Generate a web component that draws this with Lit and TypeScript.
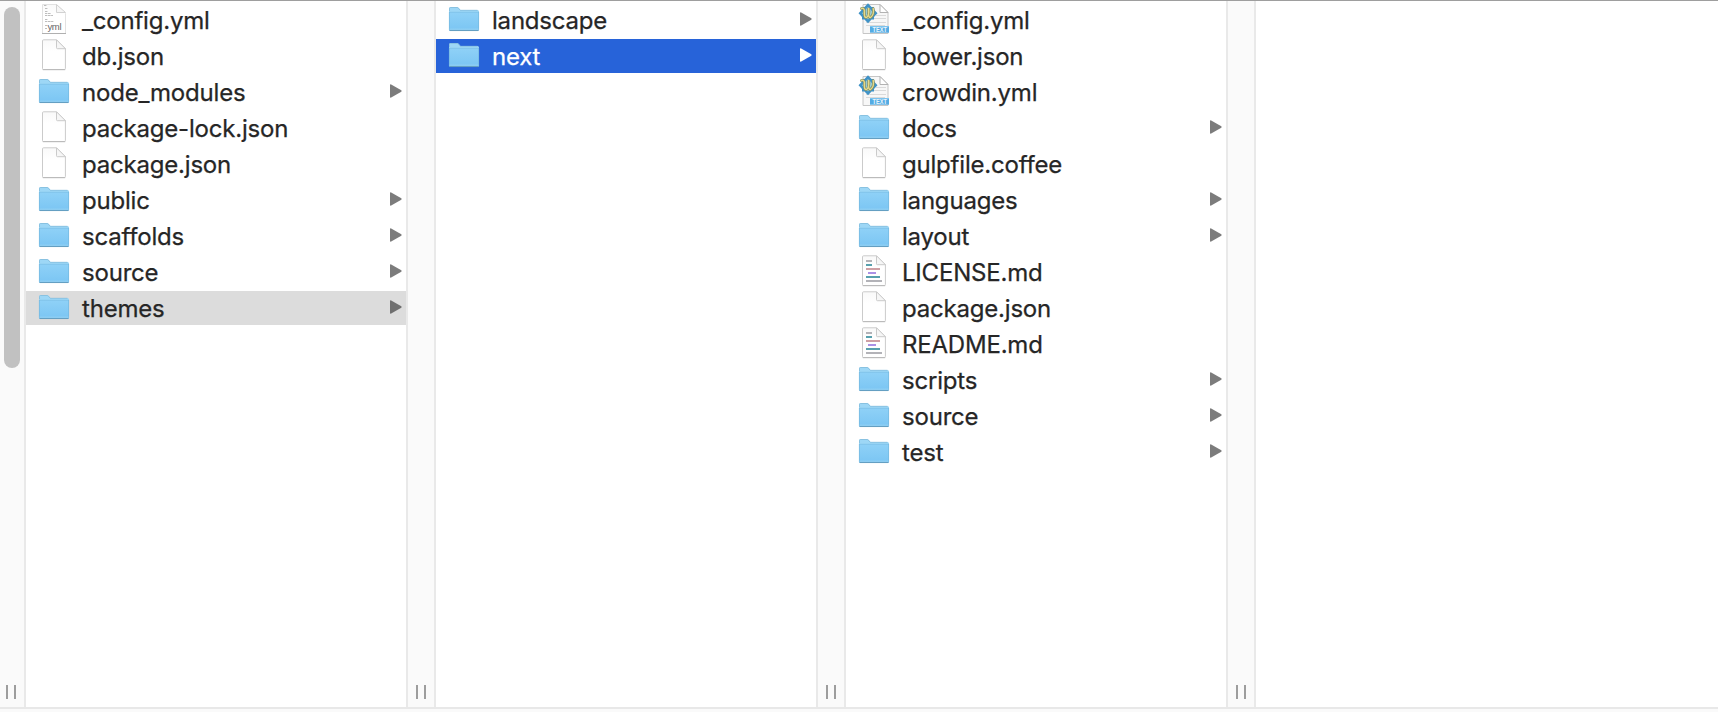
import { LitElement, html, svg, css, nothing } from "lit";
import { customElement, property } from "lit/decorators.js";
import { classMap } from "lit/directives/class-map.js";

type Kind = "folder" | "blank" | "yml" | "text" | "markdown";
interface Entry { name: string; kind: Kind; state?: "path" | "active"; }

const f = (name: string, kind: Kind = "folder", state?: "path" | "active"): Entry => ({ name, kind, state });

const COLUMNS: Entry[][] = [
  [
    f("_config.yml", "yml"), f("db.json", "blank"), f("node_modules"),
    f("package-lock.json", "blank"), f("package.json", "blank"), f("public"),
    f("scaffolds"), f("source"), f("themes", "folder", "path"),
  ],
  [f("landscape"), f("next", "folder", "active")],
  [
    f("_config.yml", "text"), f("bower.json", "blank"), f("crowdin.yml", "text"),
    f("docs"), f("gulpfile.coffee", "blank"), f("languages"), f("layout"),
    f("LICENSE.md", "markdown"), f("package.json", "blank"), f("README.md", "markdown"),
    f("scripts"), f("source"), f("test"),
  ],
];

const paperDefs = svg`<defs>
  <linearGradient id="paper" x1="0" y1="0" x2="0" y2="1">
    <stop offset="0" stop-color="#f9f9f9"/><stop offset=".4" stop-color="#fff"/>
  </linearGradient></defs>`;

const page = svg`
  <path d="M7.5 .8H20.5L29.4 9.700V29.500Q29.400 30.500 28.400 30.500H7.500Q6.500 30.500 6.500 29.500V1.800Q6.500 .8 7.500 .8Z" fill="url(#paper)" stroke="#cbcbcb"/>
  <path d="M6.800 30.700H29.200" stroke="#b8b8b8"/>
  <path d="M20.500 .8V8.700Q20.500 9.700 21.500 9.700H29.400Z" fill="#f6f6f6" stroke="#cacaca"/>`;

const glyphs: Record<Kind, unknown> = {
  folder: svg`
    <defs><linearGradient id="front" x1="0" y1="0" x2="0" y2="1">
      <stop offset="0" stop-color="#8fd1f7"/><stop offset="1" stop-color="#7ac5f3"/>
    </linearGradient></defs>
    <path d="M3 26V5.500Q3 4 4.500 4H11Q12 4 12.700 4.800L14.600 7H31.500Q33 7 33 8.500V26Z" fill="#9dd7f6"/>
    <path d="M3.500 8V5.500Q3.500 4.500 4.500 4.500H11Q12 4.500 12.500 5.300L14.300 7.300H31.500" fill="none" stroke="#84bcdc" stroke-width=".8"/>
    <path d="M3 9H33V26.500Q33 28 31.500 28H4.500Q3 28 3 26.500Z" fill="url(#front)"/>
    <path d="M3 9.300H33" stroke="#7cbfe6" stroke-width=".7"/>
    <path d="M3.400 9V27M32.600 9V27" stroke="#76b7de" stroke-width=".7"/>
    <path d="M3.500 26.200H32.500" stroke="#a4d9f6" stroke-width=".7"/>
    <path d="M3.500 27.500H32.500" stroke="#649fc2" stroke-width="1.100"/>`,
  blank: svg`${paperDefs}${page}`,
  yml: svg`${paperDefs}
    <path d="M6.500 1.500H20.500L29.500 10.500V30.500H6.500Z" fill="url(#paper)" stroke="#e2e2e2"/>
    <path d="M6 30.500H30" stroke="#b0b0b0"/>
    <path d="M20.500 1.500V9.500H29.500Z" fill="#f6f6f6" stroke="#d2d2d2"/>
    <path d="M8 2.500H11M9 5.500H12M9 8.500H12M9 10.500H15M9 12.500H17M9 16.500H12M9 18.500H18M9 22.500H11M9 25.500H11"
      stroke="#bdbdbd" stroke-dasharray="2 .6 3 .5"/>
    <text class="ext" x="11.500" y="26.800" textLength="14">yml</text>`,
  text: svg`${paperDefs}
    <path d="M7 1.500H24L32 9.500V30.500H7Z" fill="#f7f7f7" stroke="#c6c6c6"/>
    <path d="M24 1.500V9.500H32Z" fill="#fff" stroke="#b2b2b2"/>
    <path d="M20 12.500H30M17 15.500H30M10 19.500H30M10 22.500H29" stroke="#dadada"/>
    <path d="M12 .3L15.500 4L18 4V6.500L21.500 10.300L18 14V16.500H15.500L12 20.200L8.500 16.500H6V14L2.500 10.300L6 6.500V4H8.500Z" fill="#3f92c6"/>
    <path d="M12 4L18 10.300L12 16.500L6 10.300Z" fill="#9bcbd3"/>
    <g fill="none" stroke-linecap="round">
      <path d="M5.500 5.500Q8.800 4.500 8.300 9Q8 15 10.500 14.500Q13.500 12.500 12.700 5Q11.800 15 14.500 14.500Q18.500 11.500 17.200 5.500" stroke="#7e8d62" stroke-width="2.700"/>
      <path d="M5.500 5.500Q8.800 4.500 8.300 9Q8 15 10.500 14.500Q13.500 12.500 12.700 5Q11.800 15 14.500 14.500Q18.500 11.500 17.200 5.500" stroke="#e6d98a" stroke-width="1.400"/>
    </g>
    <path d="M14 23H33V29.700H14Z" fill="#53abe3"/>
    <path d="M14 23.500H33" stroke="#7cc3ee"/>
    <text class="tag" x="16.500" y="28.900" textLength="14.500" lengthAdjust="spacingAndGlyphs">TEXT</text>`,
  markdown: svg`${paperDefs}${page}
    <g stroke-width="1.800">
      <path d="M10 6H16M10 26H26" stroke="#b3b3b8"/>
      <path d="M10 10H16M10 22H24" stroke="#58a0ae"/>
      <path d="M10 14H24" stroke="#c9969b"/>
      <path d="M12 18H20" stroke="#a285e4"/>
    </g>`,
};

@customElement("file-row")
class FileRow extends LitElement {
  @property({ attribute: false }) entry!: Entry;

  static styles = css`
    :host { display: block; }
    .row {
      display: flex; align-items: center; height: 34px;
      padding: 0 4px 0 10px; box-sizing: border-box;
      color: #262626; font: 400 24px/34px Inter, "Liberation Sans", sans-serif;
    }
    .path { background: #dcdcdc; }
    .active { background: #2763d9; color: #fff; }
    .icon { flex: none; width: 36px; height: 34px; overflow: visible; }
    .name {
      flex: 1; padding: 2px 0 0 10px; white-space: nowrap;
      letter-spacing: -0.2px; -webkit-text-stroke: 0.25px currentColor;
    }
    .arrow { flex: none; width: 12px; height: 14px; margin-bottom: 2px; fill: #7c7c7c; }
    .path .arrow { fill: #6f6f6f; }
    .active .arrow { fill: #fff; }
    .ext { font: 9.5px "Liberation Sans", sans-serif; fill: #666; }
    .tag { font: bold 6.5px "Liberation Sans", sans-serif; fill: #e8f5fd; }
  `;

  render() {
    const { name, kind, state } = this.entry;
    return html`<div class=${classMap({ row: true, path: state === "path", active: state === "active" })}>
      <svg class="icon" viewBox="0 0 36 34">${glyphs[kind]}</svg>
      <span class="name">${name}</span>
      ${kind === "folder"
        ? html`<svg class="arrow" viewBox="0 0 12 14"><path d="M0 1Q0 0 1.200 .400L11.300 6.300Q12 7 11.300 7.700L1.200 13.600Q0 14 0 13Z"/></svg>`
        : nothing}
    </div>`;
  }
}

@customElement("column-gutter")
class ColumnGutter extends LitElement {
  static styles = css`
    :host {
      display: flex; flex: none; align-items: flex-end; justify-content: flex-end;
      gap: 6px; box-sizing: border-box; width: 30px; padding: 0 8px 8px 0;
      background: #fafafa; border: solid #e9e9e9; border-width: 0 2px;
    }
    :host(.first) { width: 26px; border-left: 0; }
    .grip { width: 2px; height: 14px; background: #9d9d9d; }
  `;
  render() {
    return html`<slot></slot><i class="grip"></i><i class="grip"></i>`;
  }
}

@customElement("app-root")
class AppRoot extends LitElement {
  static styles = css`
    :host {
      display: flex; flex-direction: column; box-sizing: border-box; height: 712px;
      border-top: 1px solid #9e9e9e; background: #fafafa; overflow: hidden;
    }
    .browser { display: flex; flex: none; height: 706px; background: #fff; border-bottom: 2px solid #e8e8e8; }
    .column {
      display: flex; flex-direction: column; gap: 2px; flex: none;
      box-sizing: border-box; width: 380px; padding-top: 2px;
    }
    .first { position: relative; }
    .thumb {
      position: absolute; left: 4px; top: 6px; width: 16px; height: 361px;
      border-radius: 8px; background: #c1c1c1;
    }
  `;
  render() {
    return html`<main class="browser">
      <column-gutter class="first"><div class="thumb"></div></column-gutter>
      ${COLUMNS.map((entries) => html`
        <section class="column">${entries.map((e) => html`<file-row .entry=${e}></file-row>`)}</section>
        <column-gutter></column-gutter>`)}
    </main>`;
  }
}
